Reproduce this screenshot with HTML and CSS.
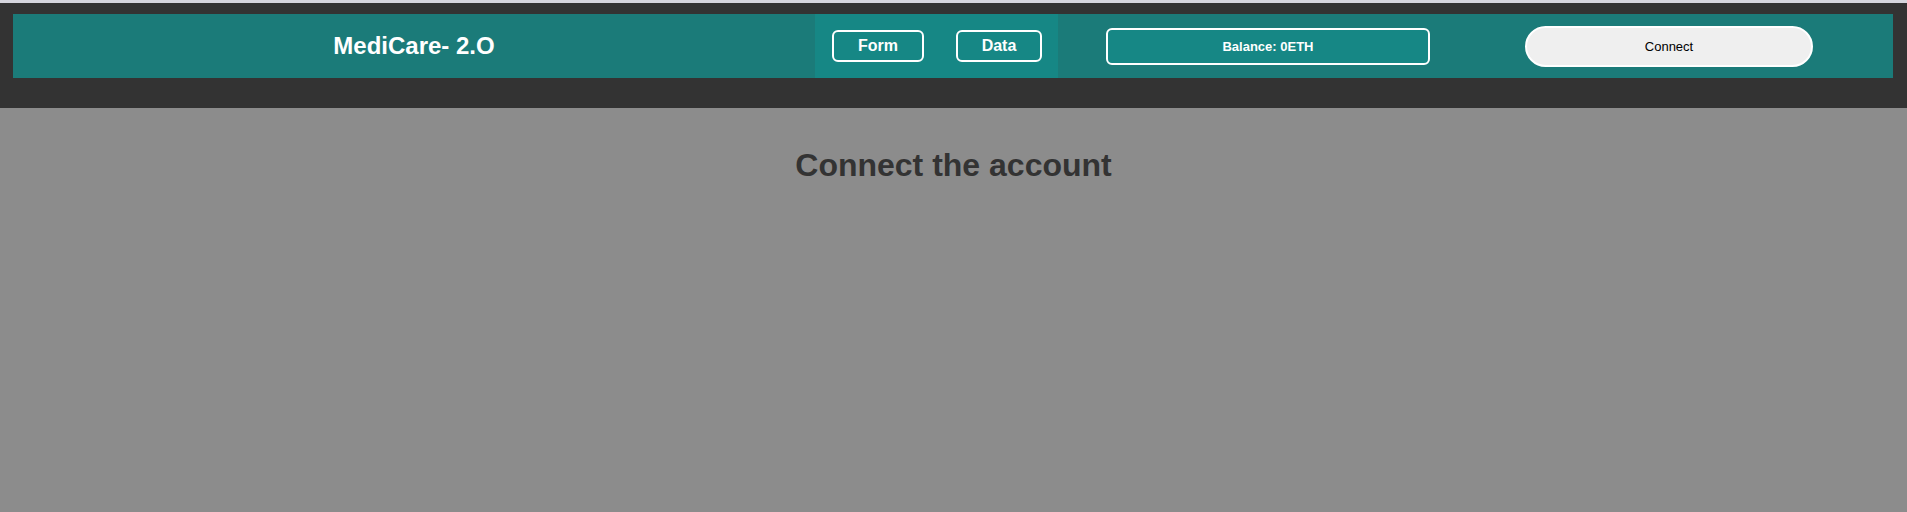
FILE: index.html
```html
<!DOCTYPE html>
<html lang="en">
<head>
<meta charset="utf-8">
<title>MediCare- 2.O</title>
<link rel="stylesheet" href="styles.css">
</head>
<body>
<div class="topstrip"></div>
<header class="header">
  <nav class="navbar">
    <div class="brand">MediCare- 2.O</div>
    <div class="links">
      <button class="link-btn link-form">Form</button>
      <button class="link-btn link-data">Data</button>
    </div>
    <div class="balance">Balance: 0ETH</div>
    <button class="connect">Connect</button>
  </nav>
</header>
<main class="main">
  <h1 class="title">Connect the account</h1>
</main>
</body>
</html>
```
FILE: styles.css
```css
html, body {
  margin: 0;
  padding: 0;
}
body {
  background: #8c8c8c;
  font-family: "Liberation Sans", Arial, sans-serif;
  min-height: 512px;
}
.topstrip {
  height: 3px;
  background: #d6d6de;
}
.header {
  background: #333333;
  padding: 11px 14px 30px 13px;
}
.navbar {
  display: flex;
  align-items: center;
  height: 64px;
  background: #1b7b79;
}
.brand {
  width: 802px;
  text-align: center;
  color: #ffffff;
  font-size: 24px;
  font-weight: bold;
}
.links {
  display: flex;
  align-items: center;
  gap: 32px;
  align-self: stretch;
  width: 243px;
  box-sizing: border-box;
  padding: 0 16px 0 17px;
  background: #168785;
}
.link-btn {
  height: 32px;
  background: transparent;
  border: 2px solid #ffffff;
  border-radius: 6px;
  color: #ffffff;
  font-family: "Liberation Sans", Arial, sans-serif;
  font-size: 16px;
  font-weight: bold;
  padding: 0;
}
.link-form { width: 92px; }
.link-data { width: 86px; }
.balance {
  margin-left: 48px;
  width: 324px;
  height: 37px;
  box-sizing: border-box;
  border: 2px solid #ffffff;
  border-radius: 6px;
  background: #168785;
  color: #ffffff;
  font-size: 13px;
  font-weight: bold;
  display: flex;
  align-items: center;
  justify-content: center;
}
.connect {
  margin-left: 95px;
  width: 288px;
  height: 41px;
  box-sizing: border-box;
  border: 2px solid #ffffff;
  border-radius: 21px;
  background: #efefef;
  color: #000000;
  font-family: "Liberation Sans", Arial, sans-serif;
  font-size: 13px;
  padding: 0;
}
.main {
  padding-top: 18px;
}
.title {
  margin: 21px 0;
  text-align: center;
  font-size: 32px;
  font-weight: bold;
  color: #333333;
}
```
